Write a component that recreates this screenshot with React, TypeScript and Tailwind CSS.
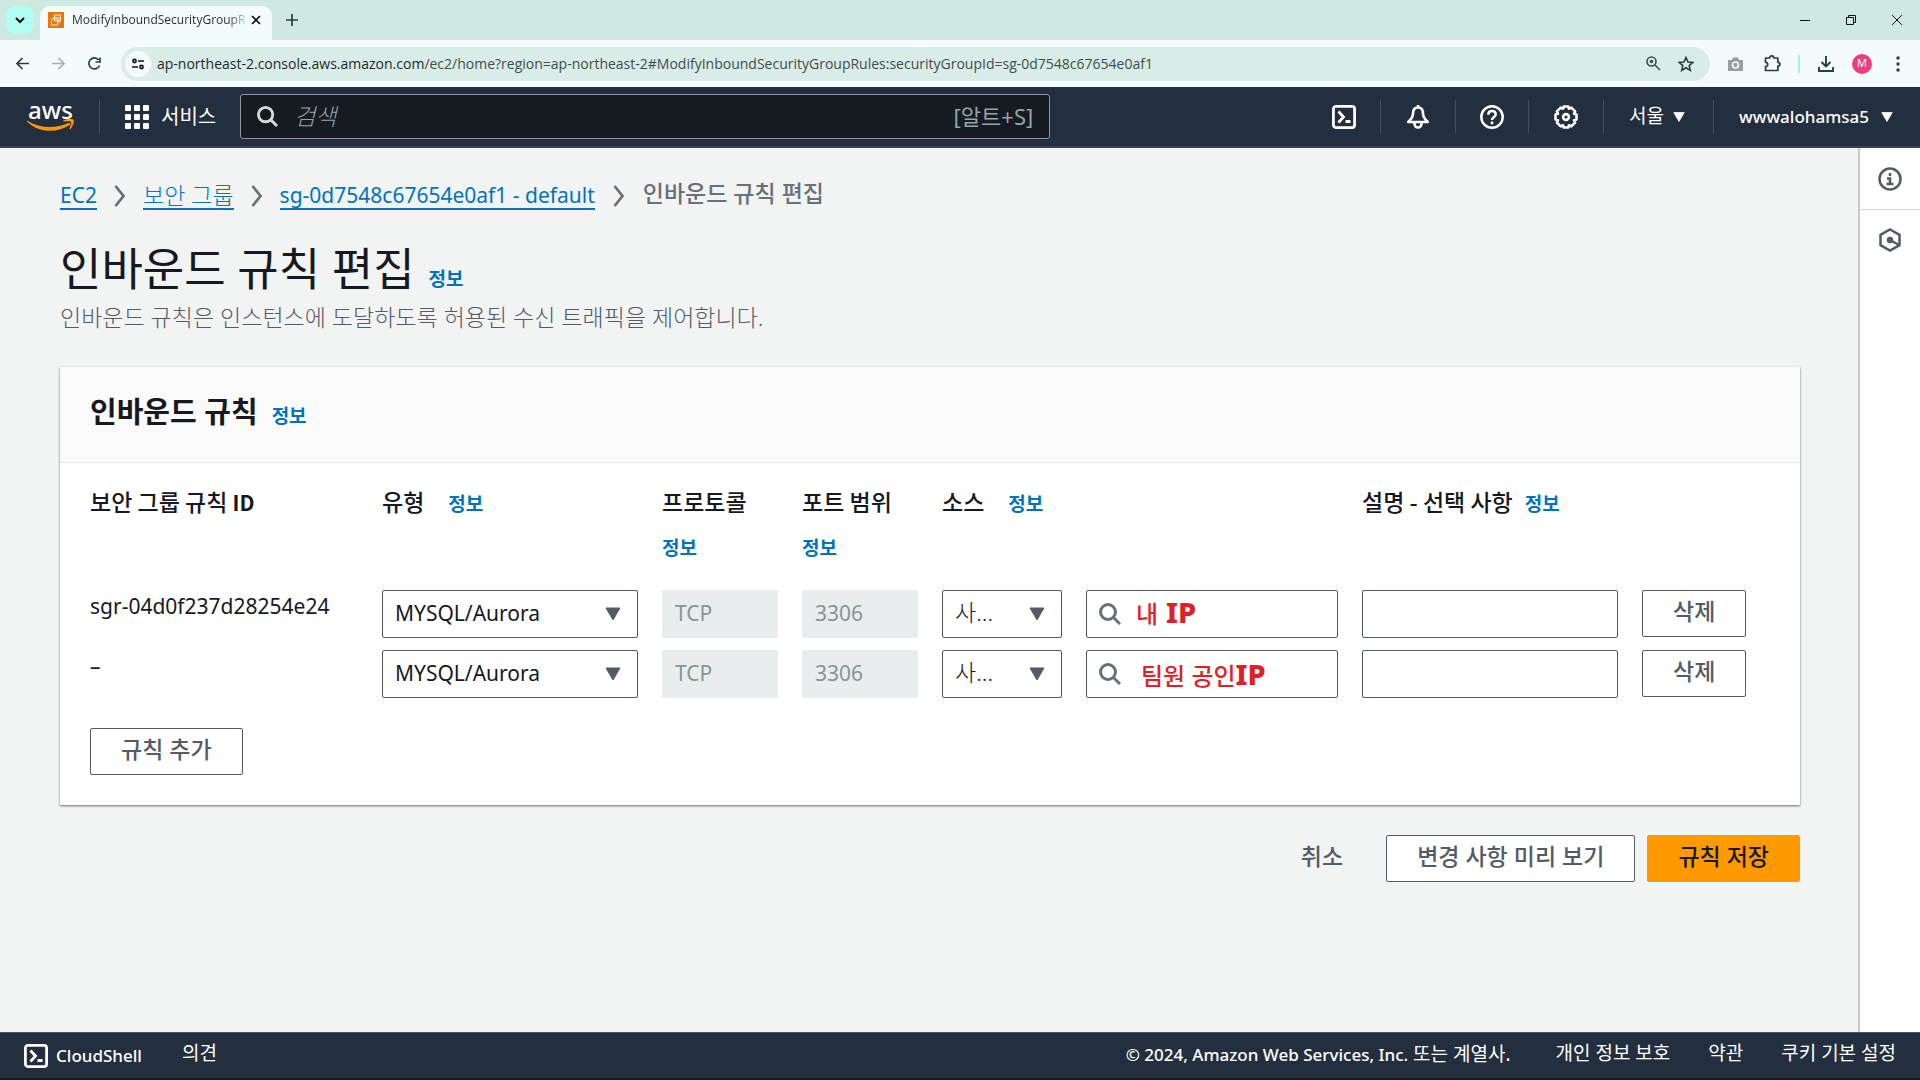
import { ReactNode } from "react";

interface IconProps {
  className?: string;
}

interface Rule {
  id: string;
  sourceNote: { hangul: string; latin: string; className: string };
}

const PAGE_FONT = "font-['Noto_Sans','Noto_Sans_CJK_KR',sans-serif]";

const PAGE_URL = {
  host: "ap-northeast-2.console.aws.amazon.com",
  path: "/ec2/home?region=ap-northeast-2#ModifyInboundSecurityGroupRules:securityGroupId=sg-0d7548c67654e0af1",
};

const RULES: Rule[] = [
  {
    id: "sgr-04d0f237d28254e24",
    sourceNote: { hangul: "내", latin: "IP", className: "top-[6px] left-[50px] gap-2" },
  },
  {
    id: "–",
    sourceNote: { hangul: "팀원 공인", latin: "IP", className: "top-2 left-[55px]" },
  },
];

const FOOTER_LINKS = ["개인 정보 보호", "약관", "쿠키 기본 설정"];

const SearchIcon = ({ className }: IconProps) => (
  <svg viewBox="0 0 22 22" className={className} fill="none" stroke="currentColor" strokeWidth="3">
    <circle cx="9" cy="9" r="7.500" />
    <path d="M14 14l7 7" />
  </svg>
);

const ShellIcon = ({ className }: IconProps) => (
  <svg viewBox="0 0 24 24" className={className} fill="none" stroke="currentColor" strokeWidth="2.8">
    <rect x="1.4" y="1.4" width="21.2" height="21.2" rx="2.5" />
    <path d="M6.5 6.5l5 5.5-5 5.5M13.500 16.500h5" />
  </svg>
);

const BellIcon = ({ className }: IconProps) => (
  <svg viewBox="0 0 24 24" className={className} fill="none" stroke="currentColor" strokeWidth="2.6">
    <path d="M12 2.5c-3.800 0-5 2.500-5 6 0 4-2 6-4.800 8.500h19.600c-2.800-2.500-4.800-4.500-4.800-8.500 0-3.500-1.200-6-5-6z" strokeLinejoin="round" />
    <path d="M8.500 17.500v1.500a3.500 3.500 0 0 0 7 0v-1.500M12 0v3" />
  </svg>
);

const HelpIcon = ({ className }: IconProps) => (
  <svg viewBox="0 0 24 24" className={className} fill="none" stroke="currentColor" strokeWidth="2.5">
    <circle cx="12" cy="12" r="10.7" />
    <path d="M8.300 9.800c0-2.300 1.500-3.800 3.700-3.800s3.700 1.400 3.700 3.400c0 2.600-3.700 2.600-3.700 5.600M12 16.500v2.700" />
  </svg>
);

const GearIcon = ({ className }: IconProps) => (
  <svg viewBox="0 0 24 24" className={className} fill="none" stroke="currentColor" strokeWidth="2.600" strokeLinejoin="round">
    <path d="M9.700 1.500h4.600l.6 2.200 2.400-1.100 3.800 3.800-1.100 2.400 2.500.7v5l-2.500.7 1.100 2.400-3.800 3.800-2.400-1.100-.6 2.200H9.700l-.6-2.200-2.400 1.100-3.800-3.800L4 15.200l-2.500-.7v-5L4 8.800 2.900 6.400l3.800-3.800 2.400 1.100z" />
    <circle cx="12" cy="12" r="2.900" />
  </svg>
);

const CaretDown = ({ className }: IconProps) => (
  <svg viewBox="0 0 16 16" className={className} fill="currentColor" stroke="currentColor" strokeWidth="1" strokeLinejoin="round">
    <path d="M1 2h14L8 14z" />
  </svg>
);

const Separator = ({ className }: IconProps) => (
  <svg viewBox="0 0 12 24" className={className} fill="none" stroke="currentColor" strokeWidth="2.800">
    <path d="M1.500 2l8 10-8 10" />
  </svg>
);

const InfoLink = ({ className = "" }: IconProps) => (
  <a href="#info" className={`text-[19px] font-bold text-[#0073bb] ${className}`}>
    정보
  </a>
);

const Select = ({ label, value, textStyle }: { label: string; value: string; textStyle: string }) => (
  <div className="relative">
    <select
      aria-label={label}
      className={`h-12 w-full appearance-none rounded-[2px] border border-[#545b64] bg-white px-3 text-[#16191f] ${textStyle}`}
    >
      <option>{value}</option>
    </select>
    <CaretDown className="pointer-events-none absolute top-4 right-[17px] size-4 text-[#545b64]" />
  </div>
);

const Button = ({ children, className = "bg-white" }: { children: ReactNode; className?: string }) => (
  <button
    type="button"
    className={`h-[47px] rounded-[2px] border pb-[6px] text-[23px] leading-7 font-medium ${className}`}
  >
    {children}
  </button>
);

const TabStrip = () => (
  <div className="flex h-10 items-end bg-[#cee9e2]">
    <button
      type="button"
      aria-label="탭 검색"
      className="mb-[6px] ml-[6px] flex size-7 items-center justify-center rounded-[10px] bg-[#b1fff0]"
    >
      <svg viewBox="0 0 10 10" className="size-[10px]" fill="none" stroke="#111" strokeWidth="2">
        <path d="M1 3l4 4 4-4" />
      </svg>
    </button>
    <div className="ml-[6px] flex h-[34px] w-[232px] items-center rounded-t-[10px] bg-[#f3fcfa] pr-[11px] pb-[6px] pl-2">
      <svg viewBox="0 0 16 16" className="size-4 shrink-0" fill="none">
        <rect width="16" height="16" fill="#e47911" />
        <path d="M6.500 3h6v6h-6zM3.500 7h6v6h-6zM5 5.500h6v6" stroke="#fff" strokeWidth=".8" />
      </svg>
      <span className="ml-2 bg-linear-to-r from-[#1f2d2a] from-90% to-[#c5d2cf] bg-clip-text text-[12px] whitespace-nowrap text-transparent font-['Open_Sans','Noto_Sans',sans-serif]">
        ModifyInboundSecurityGroupR
      </span>
      <button type="button" aria-label="탭 닫기" className="ml-auto">
        <svg viewBox="0 0 10 10" className="size-[10px]" stroke="#111" strokeWidth="1.700">
          <path d="M1 1l8 8M9 1L1 9" />
        </svg>
      </button>
    </div>
    <button type="button" aria-label="새 탭" className="mb-[14px] ml-[14px]">
      <svg viewBox="0 0 12 12" className="size-3" stroke="#28403b" strokeWidth="1.700">
        <path d="M6 0v12M0 6h12" />
      </svg>
    </button>
    <div className="mr-[18px] mb-[15px] ml-auto flex gap-9 text-[#111]">
      <button type="button" aria-label="최소화">
        <svg viewBox="0 0 10 10" className="size-[10px]" stroke="currentColor">
          <path d="M0 5.500h10" />
        </svg>
      </button>
      <button type="button" aria-label="이전 크기로">
        <svg viewBox="0 0 10 10" className="size-[10px]" fill="none" stroke="currentColor">
          <path d="M.5 2.500h7v7h-7zM2.500 2.500v-2h7v7h-2" />
        </svg>
      </button>
      <button type="button" aria-label="닫기">
        <svg viewBox="0 0 10 10" className="size-[10px]" stroke="currentColor">
          <path d="M0 0l10 10M10 0L0 10" />
        </svg>
      </button>
    </div>
  </div>
);

const AddressBar = () => (
  <div className="flex h-[47px] items-center bg-[#f3fcfa] px-4 text-[#3c4f4a]">
    <button type="button" aria-label="뒤로">
      <svg viewBox="0 0 13 13" className="size-[13px]" fill="none" stroke="#28403b" strokeWidth="1.700">
        <path d="M13 6.500H1M6.500 1L1 6.500 6.500 12" />
      </svg>
    </button>
    <button type="button" aria-label="앞으로" className="ml-[23px]">
      <svg viewBox="0 0 13 13" className="size-[13px]" fill="none" stroke="#a3b1ae" strokeWidth="1.700">
        <path d="M0 6.500h12M6.500 1L12 6.500 6.500 12" />
      </svg>
    </button>
    <button type="button" aria-label="새로고침" className="ml-[23px]">
      <svg viewBox="0 0 13 13" className="size-[13px]" fill="none" stroke="#28403b" strokeWidth="1.700">
        <path d="M11.500 8.500a5.500 5.500 0 1 1-.8-5.500M12 .5v4.500H7.500" />
      </svg>
    </button>
    <div className="ml-5 flex h-[34px] grow items-center rounded-full bg-[#daece7] pr-4 pl-1">
      <span className="flex size-[26px] items-center justify-center rounded-full bg-[#f3fcfa]">
        <svg viewBox="0 0 12 12" className="size-3" fill="none" stroke="#111" strokeWidth="1.600">
          <circle cx="2.500" cy="3" r="1.600" />
          <circle cx="9.500" cy="9" r="1.600" />
          <path d="M6 3h6M0 9h6" />
        </svg>
      </span>
      <span className="ml-[6px] text-[14px] whitespace-nowrap font-['Open_Sans','Noto_Sans',sans-serif]">
        <span className="text-[#1b2b28]">{PAGE_URL.host}</span>
        {PAGE_URL.path}
      </span>
      <span className="ml-auto flex gap-[17px]">
        <svg viewBox="0 0 15 15" className="size-[15px]" fill="none" stroke="currentColor" strokeWidth="1.600">
          <circle cx="5.500" cy="5.500" r="4.500" />
          <path d="M9 9l5 5" />
          <circle cx="5.500" cy="5.500" r="1" fill="currentColor" />
        </svg>
        <svg viewBox="0 0 16 16" className="size-4" fill="none" stroke="#28403b" strokeWidth="1.600">
          <path d="M8 1.500l2 4.500 4.800.4-3.600 3.200 1.100 4.800L8 11.800l-4.300 2.600 1.100-4.800L1.200 6.400 6 6z" />
        </svg>
      </span>
    </div>
    <svg viewBox="0 0 15 14" className="ml-[18px] h-[14px] w-[15px]" fill="none">
      <path d="M0 3h4l1-2.500h5L11 3h4v11H0z" fill="#979f9d" />
      <circle cx="7.500" cy="8" r="3" stroke="#f3fcfa" strokeWidth="1.700" />
    </svg>
    <svg viewBox="0 0 17 17" className="ml-[21px] size-[17px]" fill="none" stroke="#28403b" strokeWidth="1.700" strokeLinejoin="round">
      <path d="M1.500 3h4.200c0-2.800 4-2.800 4 0h4.200v4.300c2.700.2 2.700 3.500 0 3.700v4.500H1.500v-4c3-.2 3-4 0-4.200z" />
    </svg>
    <span className="ml-[17px] h-[18px] w-[2px] bg-[#a8eee2]" />
    <svg viewBox="0 0 16 16" className="ml-[18px] size-4" fill="none" stroke="#28403b" strokeWidth="1.900">
      <path d="M8 0v10M3.500 6L8 10.500 12.500 6M1 11v4h14v-4" />
    </svg>
    <span className="ml-[18px] flex size-5 items-center justify-center rounded-full bg-[#e93f7c] text-[11px] text-white">
      M
    </span>
    <svg viewBox="0 0 4 16" className="mr-1 ml-6 h-4 w-1" fill="#28403b">
      <circle cx="2" cy="2" r="1.700" />
      <circle cx="2" cy="8" r="1.700" />
      <circle cx="2" cy="14" r="1.700" />
    </svg>
  </div>
);

const NavDivider = () => <span className="h-[34px] w-px shrink-0 bg-[#414d5c]" />;

const ConsoleNav = () => (
  <header className="flex h-[61px] items-center border-b-2 border-[#3a434f] bg-[#232f3e] text-white">
    <a href="#home" aria-label="aws" className="ml-[27px] flex w-[47px] flex-col items-center">
      <span className="text-[24px] leading-[18px] font-medium">aws</span>
      <svg viewBox="0 0 47 13" className="h-[13px] w-[47px]" fill="#ff9900">
        <path d="M0 1.500c13 8 28 8.500 41.500 2.500 1.500-.5 2.500 1 1 2C30 14.500 11 14 0 2.500c-.6-.7 0-1.300 0-1z" />
        <path d="M36.500 1.500c3-2 8.500-2 10-.8 1 1.500-.6 7-3 9.300-.6.500-1.200.2-1-.4 1-2.600 2.100-5.600 1.500-6.600-.8-1-4-.8-7-.4-.8 0-1-.7-.5-1.100z" />
      </svg>
    </a>
    <span className="ml-[25px] flex">
      <NavDivider />
    </span>
    <button type="button" className="ml-[25px] flex items-center gap-3">
      <svg viewBox="0 0 24 24" className="size-6" fill="currentColor">
        {[0, 9, 18].map((y) =>
          [0, 9, 18].map((x) => <rect key={`${x}-${y}`} x={x} y={y} width="6" height="6" rx="1" />),
        )}
      </svg>
      <span className="text-[20px] leading-6">서비스</span>
    </button>
    <label className="ml-6 flex h-[45px] w-[810px] items-center rounded-[3px] border border-[#8d99a5] bg-[#161a21] px-4">
      <SearchIcon className="size-[21px] shrink-0 text-[#d5dbdb]" />
      <input
        type="search"
        aria-label="검색"
        placeholder="검색"
        className="ml-4 min-w-0 grow bg-transparent text-[23px] font-light italic outline-none placeholder:text-[#95a5a6]"
      />
      <span className="text-[22px] text-[#95a5a6]">[알트+S]</span>
    </label>
    <div className="mr-[27px] ml-auto flex items-center">
      <button type="button" aria-label="CloudShell" className="mr-6">
        <ShellIcon className="size-6" />
      </button>
      <NavDivider />
      <button type="button" aria-label="알림" className="mx-[25px]">
        <BellIcon className="size-6" />
      </button>
      <NavDivider />
      <button type="button" aria-label="도움말" className="mx-6">
        <HelpIcon className="size-6" />
      </button>
      <NavDivider />
      <button type="button" aria-label="설정" className="mx-[25px]">
        <GearIcon className="size-6" />
      </button>
      <NavDivider />
      <button type="button" className="mr-7 ml-[25px] flex items-center gap-[9px] text-[19px]">
        서울
        <CaretDown className="size-3" />
      </button>
      <NavDivider />
      <button type="button" className="ml-[25px] flex items-center gap-3 text-[17px] font-medium">
        wwwalohamsa5
        <CaretDown className="size-3" />
      </button>
    </div>
  </header>
);

const Breadcrumbs = () => (
  <nav aria-label="breadcrumb" className="flex items-center text-[21px] leading-[26px] text-[#0073bb]">
    <a href="#ec2" className="border-b-2">
      EC2
    </a>
    <Separator className="mx-[17px] h-6 w-3 text-[#687078]" />
    <a href="#groups" className="border-b-2 text-[23px] font-light">
      보안 그룹
    </a>
    <Separator className="mx-[17px] h-6 w-3 text-[#687078]" />
    <a href="#group" className="border-b-2">
      sg-0d7548c67654e0af1 - default
    </a>
    <Separator className="mx-[18px] h-6 w-3 text-[#687078]" />
    <span className="pb-[6px] text-[23px] font-medium text-[#687078]">인바운드 규칙 편집</span>
  </nav>
);

const RulesTable = () => (
  <table className="w-full table-fixed text-left">
    <colgroup>
      <col className="w-[292px]" />
      <col className="w-[280px]" />
      <col className="w-[140px]" />
      <col className="w-[140px]" />
      <col className="w-[144px]" />
      <col className="w-[276px]" />
      <col className="w-[280px]" />
      <col className="w-[128px]" />
    </colgroup>
    <thead className="font-['Noto_Sans_CJK_KR',sans-serif]">
      <tr className="h-[111px] align-top text-[23px] leading-[45px] text-[#16191f] *:font-medium">
        <th scope="col">
          보안 그룹 규칙 <span className="text-[21px] font-bold">ID</span>
        </th>
        <th scope="col">
          유형
          <InfoLink className="ml-6" />
        </th>
        <th scope="col">
          프로토콜
          <InfoLink className="block" />
        </th>
        <th scope="col">
          포트 범위
          <InfoLink className="block" />
        </th>
        <th scope="col" colSpan={2}>
          소스
          <InfoLink className="ml-6" />
        </th>
        <th scope="col" className="whitespace-nowrap">
          설명 - 선택 사항
          <InfoLink className="ml-3" />
        </th>
        <td />
      </tr>
    </thead>
    <tbody>
      {RULES.map(({ id, sourceNote }) => (
        <tr key={id} className="h-[60px] align-top text-[21px]">
          <td className="leading-8 text-[#16191f]">{id}</td>
          <td className="pr-6">
            <Select label="유형" value="MYSQL/Aurora" textStyle="text-[21px]" />
          </td>
          <td className="pr-6">
            <input
              aria-label="프로토콜"
              disabled
              defaultValue="TCP"
              className="h-12 w-full rounded-[2px] bg-[#eaeded] px-[13px] pb-[2px] text-[#879596]"
            />
          </td>
          <td className="pr-6">
            <input
              aria-label="포트 범위"
              disabled
              defaultValue="3306"
              className="h-12 w-full rounded-[2px] bg-[#eaeded] px-[13px] pb-[2px] text-[#879596]"
            />
          </td>
          <td className="pr-6">
            <Select label="소스 유형" value="사..." textStyle="pb-1 text-[23px] font-light" />
          </td>
          <td className="pr-6">
            <div className="relative">
              <input
                aria-label="소스"
                className="h-12 w-full rounded-[2px] border border-[#545b64] bg-white pr-3 pl-12"
              />
              <SearchIcon className="pointer-events-none absolute top-[13px] left-[13px] size-[22px] text-[#687078]" />
              <span
                className={`pointer-events-none absolute flex items-baseline text-[24px] leading-8 font-medium text-[#e01f26] ${sourceNote.className}`}
              >
                <span>{sourceNote.hangul}</span>
                <span className="text-[29px] font-extrabold">{sourceNote.latin}</span>
              </span>
            </div>
          </td>
          <td className="pr-6">
            <input
              aria-label="설명"
              className="h-12 w-full rounded-[2px] border border-[#545b64] bg-white px-3"
            />
          </td>
          <td>
            <Button className="border-[#545b64] bg-white px-[30px] text-[#545b64]">삭제</Button>
          </td>
        </tr>
      ))}
    </tbody>
  </table>
);

const SideRail = () => (
  <aside className="w-[62px] shrink-0 border-l-2 border-[#c6cacc] bg-white text-[#545b64]">
    <button
      type="button"
      aria-label="정보 패널"
      className="flex h-[62px] w-full items-center justify-center border-b border-[#d5dbdb]"
    >
      <svg viewBox="0 0 24 24" className="size-6" fill="none" stroke="currentColor" strokeWidth="2.500">
        <circle cx="12" cy="12" r="10.500" />
        <path d="M12 6v3M9 11.500h3V17M8.500 17h7" />
      </svg>
    </button>
    <button type="button" aria-label="튜토리얼 패널" className="flex h-[60px] w-full items-center justify-center">
      <svg viewBox="0 0 24 24" className="size-6" fill="none" stroke="currentColor" strokeWidth="2.500">
        <path d="M12 1.500l9.500 5.300v10.400L12 22.500l-9.500-5.300V6.800zM12 12l9 5" />
        <circle cx="12" cy="12" r="2" fill="currentColor" />
      </svg>
    </button>
  </aside>
);

const ConsoleFooter = () => (
  <footer className="flex h-12 items-center border-t border-b-2 border-t-[#4a5460] border-b-[#16191f] bg-[#232f3e] px-6 text-[19px] text-white">
    <button type="button" className="flex items-center gap-2 text-[17px] font-medium">
      <ShellIcon className="size-6" />
      CloudShell
    </button>
    <a href="#feedback" className="ml-10 pb-1">
      의견
    </a>
    <p className="ml-auto pb-[2px]">
      <span className="text-[17px] font-medium">© 2024, Amazon Web Services, Inc.</span> 또는 계열사.
    </p>
    <div className="ml-[45px] flex gap-[38px] pb-1">
      {FOOTER_LINKS.map((text) => (
        <a key={text} href="#legal">
          {text}
        </a>
      ))}
    </div>
  </footer>
);

const App: React.FC = () => {
  return (
    <div className={`flex min-h-screen flex-col bg-[#f2f3f3] ${PAGE_FONT}`}>
      <TabStrip />
      <AddressBar />
      <ConsoleNav />
      <div className="flex grow">
        <main className="min-w-0 grow pt-8 pr-[58px] pl-[60px]">
          <Breadcrumbs />
          <h1 className="mt-[33px] flex items-baseline gap-[14px] text-[45px] leading-[48px] text-[#16191f]">
            인바운드 규칙 편집
            <InfoLink />
          </h1>
          <p className="text-[23px] leading-7 font-light text-[#545b64]">
            인바운드 규칙은 인스턴스에 도달하도록 허용된 수신 트래픽을 제어합니다.
          </p>
          <section className="mt-9 bg-white shadow-[0_1px_2px_0_rgba(0,28,36,0.6)]">
            <h2 className="flex h-24 items-baseline gap-[14px] border-b border-[#eaeded] bg-[#fafafa] px-[30px] pt-[22px] text-[29px] leading-[45px] font-bold text-[#16191f]">
              인바운드 규칙
              <InfoLink />
            </h2>
            <div className="px-[30px] pt-4 pb-[30px]">
              <RulesTable />
              <Button className="mt-[18px] border-[#545b64] bg-white px-[30px] text-[#545b64]">규칙 추가</Button>
            </div>
          </section>
          <div className="mt-[30px] flex justify-end">
            <Button className="mr-3 border-transparent px-[30px] text-[#545b64]">취소</Button>
            <Button className="mr-3 border-[#545b64] bg-white px-[30px] text-[#545b64]">변경 사항 미리 보기</Button>
            <Button className="border-[#ff9900] bg-[#ff9900] px-[30px] text-[#16191f]">규칙 저장</Button>
          </div>
        </main>
        <SideRail />
      </div>
      <ConsoleFooter />
    </div>
  );
};

export default App;
